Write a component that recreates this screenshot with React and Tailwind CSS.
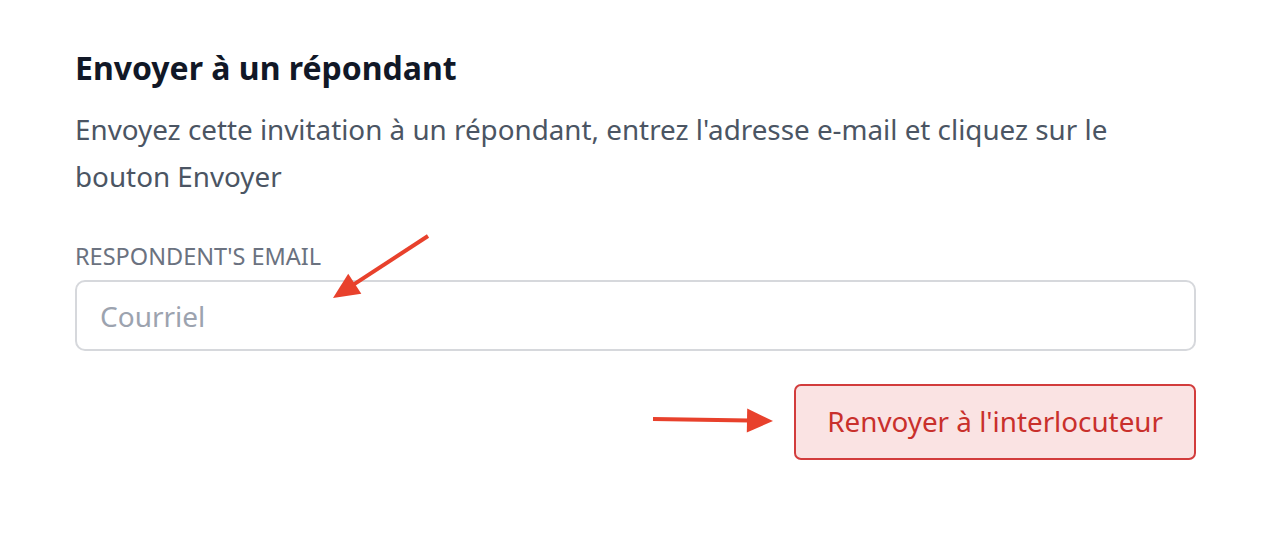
import React from 'react';

const Arrow = ({ x1, y1, x2, y2 }) => {
  const dx = x2 - x1;
  const dy = y2 - y1;
  const len = Math.sqrt(dx * dx + dy * dy);
  const ux = dx / len;
  const uy = dy / len;
  const hl = 26;
  const hw = 12;
  const bx = x2 - ux * hl;
  const by = y2 - uy * hl;
  const p1 = `${bx - uy * hw},${by + ux * hw}`;
  const p2 = `${bx + uy * hw},${by - ux * hw}`;
  return (
    <g>
      <line x1={x1} y1={y1} x2={bx + ux * 2} y2={by + uy * 2} stroke="#e8412c" strokeWidth="4" />
      <polygon points={`${x2},${y2} ${p1} ${p2}`} fill="#e8412c" />
    </g>
  );
};

const App = () => {
  return (
    <div className="relative w-full h-[548px] bg-white font-['Noto_Sans',sans-serif]">
      <div className="pl-[75px] pr-[70px] pt-[48px]">
        <h2 className="text-[32px] font-bold text-[#111827] leading-[40px]">Envoyer à un répondant</h2>
        <p className="mt-[18px] text-[27.8px] leading-[47px] text-[#4b5563]">
          Envoyez cette invitation à un répondant, entrez l'adresse e-mail et cliquez sur le bouton Envoyer
        </p>
        <label className="block mt-[40px] text-[23.5px] leading-[32px] text-[#6b7280] uppercase">
          Respondent's email
        </label>
        <input
          type="email"
          placeholder="Courriel"
          className="mt-[8px] w-full h-[71px] px-[23px] rounded-[10px] border-2 border-[#d6d8dc] text-[28px] placeholder:text-[#9ca3af] outline-none"
        />
        <div className="flex justify-end mt-[33px]">
          <button className="h-[76px] px-[31px] rounded-[7px] border-2 border-[#d23c3c] bg-[#fae3e3] text-[#c9302c] text-[27.8px]">
            Renvoyer à l'interlocuteur
          </button>
        </div>
      </div>
      <svg className="absolute inset-0 pointer-events-none" width="1266" height="548">
        <Arrow x1={428} y1={236} x2={333} y2={298} />
        <Arrow x1={653} y1={419} x2={773} y2={421} />
      </svg>
    </div>
  );
};

export default App;
